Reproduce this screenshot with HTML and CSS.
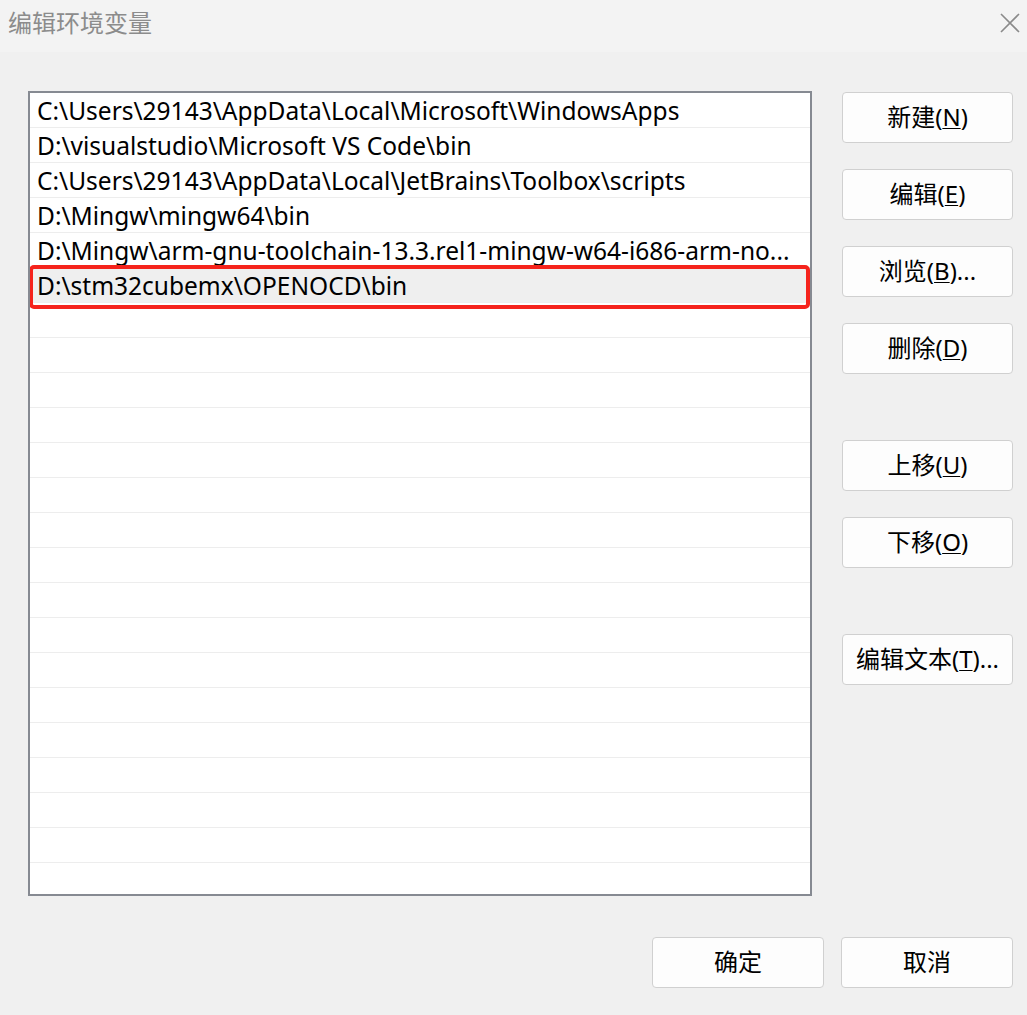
FILE: index.html
```html
<!DOCTYPE html>
<html lang="zh-CN">
<head>
<meta charset="utf-8">
<title>编辑环境变量</title>
<link rel="stylesheet" href="styles.css">
</head>
<body>
<div class="window">
  <div class="titlebar">
    <span class="title">编辑环境变量</span>
    <span class="close">
      <svg width="20" height="20" viewBox="0 0 20 20"><path d="M1 1L19 19M19 1L1 19" stroke="#8a8a8a" stroke-width="1.6" fill="none"/></svg>
    </span>
  </div>
  <div class="main">
    <div class="list">
      <div class="row">C:\Users\29143\AppData\Local\Microsoft\WindowsApps</div>
      <div class="row">D:\visualstudio\Microsoft VS Code\bin</div>
      <div class="row">C:\Users\29143\AppData\Local\JetBrains\Toolbox\scripts</div>
      <div class="row">D:\Mingw\mingw64\bin</div>
      <div class="row">D:\Mingw\arm-gnu-toolchain-13.3.rel1-mingw-w64-i686-arm-no...</div>
      <div class="row selected">D:\stm32cubemx\OPENOCD\bin</div>
      <div class="row"></div>
      <div class="row"></div>
      <div class="row"></div>
      <div class="row"></div>
      <div class="row"></div>
      <div class="row"></div>
      <div class="row"></div>
      <div class="row"></div>
      <div class="row"></div>
      <div class="row"></div>
      <div class="row"></div>
      <div class="row"></div>
      <div class="row"></div>
      <div class="row"></div>
      <div class="row"></div>
      <div class="row"></div>
      <div class="row last"></div>
      <div class="highlight"></div>
    </div>
    <div class="side">
      <div class="group">
        <button class="btn">新建(<u>N</u>)</button>
        <button class="btn">编辑(<u>E</u>)</button>
        <button class="btn">浏览(<u>B</u>)...</button>
        <button class="btn">删除(<u>D</u>)</button>
      </div>
      <div class="group">
        <button class="btn">上移(<u>U</u>)</button>
        <button class="btn">下移(<u>O</u>)</button>
      </div>
      <div class="group">
        <button class="btn">编辑文本(<u>T</u>)...</button>
      </div>
    </div>
  </div>
  <div class="footer">
    <button class="btn wide">确定</button>
    <button class="btn wide">取消</button>
  </div>
</div>
</body>
</html>
```
FILE: styles.css
```css
* { box-sizing: border-box; }
html, body {
  margin: 0;
  padding: 0;
  background: #f0f0f0;
}
body {
  font-family: "Noto Sans", "Noto Sans CJK SC", sans-serif;
  color: #000;
}
.window {
  width: 1027px;
  height: 1015px;
  overflow: hidden;
}
.titlebar {
  height: 52px;
  background: #f3f3f3;
  display: flex;
  align-items: center;
  justify-content: space-between;
  padding: 0 7px 0 8px;
}
.title {
  font-family: "Noto Sans CJK SC", sans-serif;
  font-size: 24px;
  line-height: 30px;
  color: #8c8c8c;
  margin-top: -8px;
}
.close {
  display: flex;
  width: 20px;
  height: 20px;
  margin-top: -6px;
}
.main {
  display: flex;
  padding: 39px 0 0 28px;
}
.list {
  position: relative;
  width: 784px;
  height: 805px;
  border: 2px solid #868a92;
  background: #fff;
  overflow: hidden;
}
.row {
  height: 35px;
  border-bottom: 1px solid #ededed;
  padding: 1px 14px 0 7px;
  font-size: 24.5px;
  line-height: 33px;
  white-space: nowrap;
  overflow: hidden;
  text-overflow: ellipsis;
}
.row.last { border-bottom: none; }
.row.selected { background: #efefef; }
.highlight {
  position: absolute;
  left: -1px;
  top: 172px;
  width: 781px;
  height: 44px;
  border: 4px solid #f5231c;
  border-radius: 5px;
}
.side {
  display: flex;
  flex-direction: column;
  gap: 66px;
  margin-left: 30px;
  padding-top: 1px;
}
.group {
  display: flex;
  flex-direction: column;
  gap: 26px;
}
.btn {
  width: 171px;
  height: 51px;
  background: #fdfdfd;
  border: 1px solid #d0d0d0;
  border-radius: 4px;
  font-family: "Noto Sans", "Noto Sans CJK SC", sans-serif;
  font-size: 24px;
  line-height: 30px;
  color: #000;
  padding: 0 0 1px 0;
  display: flex;
  align-items: center;
  justify-content: center;
}
.btn u { text-underline-offset: 2px; text-decoration-thickness: 1px; }
.footer {
  display: flex;
  justify-content: flex-end;
  gap: 17px;
  padding: 41px 14px 0 0;
}
.btn.wide { width: 172px; }
```
